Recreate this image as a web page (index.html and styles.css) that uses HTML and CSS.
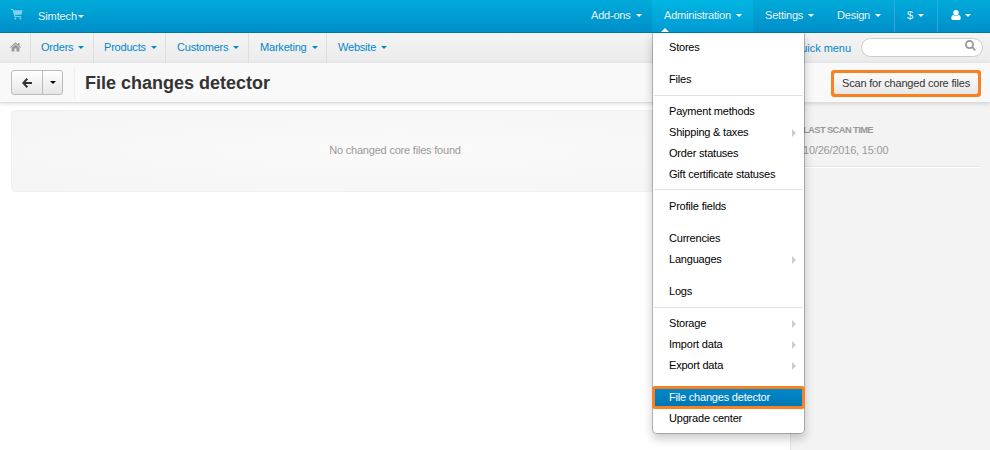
FILE: index.html
```html
<!DOCTYPE html>
<html lang="en">
<head>
<meta charset="utf-8">
<title>File changes detector</title>
<link rel="stylesheet" href="styles.css">
</head>
<body>
<header class="topbar">
  <svg class="cart" viewBox="0 0 12 11"><path d="M0 .5h2L3.800 7.600h6.400" fill="none" stroke="currentColor"/><path d="M2.300 1.200H11.500L10.600 5.400 3.500 6.200z" fill="currentColor"/><circle cx="4.300" cy="9.500" r="1" fill="currentColor"/><circle cx="9.400" cy="9.500" r="1" fill="currentColor"/></svg>
  <a class="store">Simtech<i class="caret"></i></a>
  <nav class="mainnav">
    <a class="addons">Add-ons<i class="caret"></i></a>
    <div class="admin">
      <a>Administration<i class="caret"></i></a>
      <ul class="menu">
        <li>Stores</li>
        <li class="gap"></li>
        <li>Files</li>
        <li class="gap line"></li>
        <li>Payment methods</li>
        <li class="more">Shipping &amp; taxes</li>
        <li>Order statuses</li>
        <li>Gift certificate statuses</li>
        <li class="gap line high"></li>
        <li>Profile fields</li>
        <li class="gap"></li>
        <li>Currencies</li>
        <li class="more">Languages</li>
        <li class="gap"></li>
        <li>Logs</li>
        <li class="gap line"></li>
        <li class="more">Storage</li>
        <li class="more">Import data</li>
        <li class="more">Export data</li>
        <li class="gap"></li>
        <li class="active">File changes detector</li>
        <li>Upgrade center</li>
      </ul>
    </div>
    <a class="settings">Settings<i class="caret"></i></a>
    <a class="design">Design<i class="caret"></i></a>
    <a class="currency">$<i class="caret"></i></a>
    <a class="user"><svg viewBox="0 0 10 10"><circle cx="5" cy="2.700" r="2.700"/><path d="M.300 8.300Q.300 5 2.400 4.900 5 6.700 7.600 4.900 9.700 5 9.700 8.300 9.700 10 8.400 10H1.600Q.300 10 .300 8.300z"/></svg><i class="caret"></i></a>
  </nav>
</header>
<nav class="subnav">
  <a class="home"><svg viewBox="0 0 11 10"><path d="M5.500.300 11 5.200l-.600.700L5.500 1.700.600 5.900 0 5.200z"/><path d="M8 .900h1.500v3L8 2.500z"/><path d="M5.500 2.500 9.400 5.800V9.500H6.500V6.500h-2v3H1.600V5.800z"/></svg></a>
  <a class="orders">Orders<i class="caret"></i></a>
  <a class="products">Products<i class="caret"></i></a>
  <a class="customers">Customers<i class="caret"></i></a>
  <a class="marketing">Marketing<i class="caret"></i></a>
  <a class="website">Website<i class="caret"></i></a>
  <a class="quick">Quick menu</a>
  <div class="search"><svg viewBox="0 0 11 11"><circle cx="4.500" cy="4.500" r="3.600"/><path d="M7.200 7.200 10.300 10.300"/></svg></div>
</nav>
<section class="titlebar">
  <div class="btngroup">
    <span class="back"><svg viewBox="0 0 10 10"><path d="M5.300.700 1.300 5l4 4.300M1.500 5H10"/></svg></span>
    <span class="drop"><i class="caret"></i></span>
  </div>
  <h1>File changes detector</h1>
  <div class="highlight"><button>Scan for changed core files</button></div>
</section>
<main>
  <div class="content"><p class="empty">No changed core files found</p></div>
  <aside>
    <h6>LAST SCAN TIME</h6>
    <p>10/26/2016, 15:00</p>
  </aside>
</main>
</body>
</html>
```
FILE: styles.css
```css
* { box-sizing: border-box; }
body {
  margin: 0;
  width: 990px;
  height: 450px;
  overflow: hidden;
  display: flex;
  flex-direction: column;
  background: #fff;
  font: 11px/21px "Liberation Sans", Arial, sans-serif;
  letter-spacing: -.2px;
}
.caret {
  display: inline-block;
  border: 3px solid transparent;
  border-top-color: currentColor;
  border-bottom: 0;
  margin-left: 5px;
  vertical-align: 2px;
}
.topbar {
  flex: none;
  height: 33px;
  display: flex;
  background: linear-gradient(#00abda, #008fc9);
  border-bottom: 1px solid #0078a8;
  color: #e9f8fd;
  line-height: 31px;
  text-shadow: 0 -1px 0 rgba(0, 0, 0, .15);
}
.topbar .caret { color: #fff; }
.cart { width: 12px; height: 11px; margin: 9px 15px 0 11px; color: #80d1eb; }
.store { line-height: 32px; letter-spacing: -.1px; }
.store .caret { margin-left: 1px; }
.mainnav { display: flex; margin-left: auto; }
.mainnav > * { padding-left: 12px; white-space: nowrap; }
.addons { width: 73px; }
.admin { width: 101px; position: relative; background: linear-gradient(#00b6e3, #009bd4); }
.admin::after {
  content: "";
  position: absolute;
  left: 9px;
  bottom: 0;
  border: 4px solid transparent;
  border-top: 0;
  border-bottom-color: #fff;
}
.settings { width: 72px; }
.design { width: 69px; }
.currency, .user { border-left: 1px solid #35a5e0; }
.currency { width: 43px; }
.user { width: 53px; }
.user svg { width: 10px; height: 10px; fill: #fff; margin-left: 1px; vertical-align: -1px; }
.user .caret { margin-left: 4px; }
.menu {
  position: absolute;
  z-index: 5;
  left: 0;
  top: 33px;
  width: 153px;
  margin: 0;
  padding: 4px 1px;
  list-style: none;
  background: #fff;
  background-clip: padding-box;
  border: 1px solid rgba(0, 0, 0, .22);
  border-top: 0;
  border-radius: 0 0 5px 5px;
  box-shadow: 0 5px 10px rgba(0, 0, 0, .2);
  color: #000;
  line-height: 21px;
  text-shadow: none;
}
.menu li { height: 21px; padding-left: 15px; }
.menu .gap { height: 11px; }
.menu .line { padding: 5px 0; }
.menu .high { padding: 4px 0 6px; }
.menu .line::after { content: ""; display: block; height: 1px; background: #e3e3e3; }
.more { display: flex; align-items: center; justify-content: space-between; padding-right: 7px; }
.more::after { content: ""; border: 4px solid transparent; border-left-color: #ccc; border-right: 0; }
.menu .active {
  height: 23px;
  margin: -1px -2px;
  padding-left: 14px;
  line-height: 17px;
  color: #fff;
  background: linear-gradient(#0088cc, #0077b3) padding-box, #f98121;
  border: 3px solid #f98121;
  border-radius: 3px;
}
.subnav {
  flex: none;
  height: 30px;
  display: flex;
  background: linear-gradient(#f4f4f4, #ebebeb);
  color: #08c;
  line-height: 29px;
}
.subnav > a { white-space: nowrap; padding-left: 10px; }
.home { width: 31px; border-right: 1px solid #dedede; }
.home svg { width: 11px; height: 10px; fill: #999; vertical-align: -1px; }
.orders { width: 63px; border-right: 1px solid #dedede; }
.products { width: 72px; border-right: 1px solid #dedede; }
.customers { width: 83px; border-right: 1px solid #dedede; }
.marketing { width: 78px; border-right: 1px solid #dedede; }
.website { width: 80px; }
.subnav > .customers, .subnav > .marketing, .subnav > .website { padding-left: 11px; }
.subnav > .quick { margin: 0 10px 0 auto; line-height: 31px; letter-spacing: -.05px; }
.search {
  width: 122px;
  height: 19px;
  margin: 5px 7px 0 0;
  border: 1px solid #ccc;
  border-radius: 10px;
  background: #fff;
  display: flex;
  justify-content: flex-end;
  padding: 1px 6px;
}
.search svg { width: 11px; height: 11px; fill: none; stroke: #999; stroke-width: 1.7; }
.titlebar {
  flex: none;
  height: 40px;
  display: flex;
  align-items: center;
  background: #f9f9f9;
  border-bottom: 1px solid #dcdcdc;
  box-shadow: 0 1px 4px rgba(0, 0, 0, .13);
  padding: 0 9px 0 11px;
  position: relative;
}
.btngroup {
  width: 52px;
  height: 25px;
  display: flex;
  border: 1px solid #bbb;
  border-radius: 3px;
  background: linear-gradient(#fff, #e6e6e6);
}
.back, .drop { display: flex; align-items: center; justify-content: center; }
.back { width: 31px; border-right: 1px solid #bbb; }
.back svg { width: 10px; height: 10px; fill: none; stroke: #333; stroke-width: 2; }
.drop { flex: 1; }
.drop .caret { margin: 0; }
h1 {
  margin: 0 0 0 11px;
  padding-left: 10px;
  border-left: 1px solid #eee;
  font-size: 18px;
  line-height: 32px;
  letter-spacing: 0;
  color: #333;
}
.highlight { margin: 1px 0 0 auto; width: 150px; height: 27px; background: #f98121; border-radius: 3px; padding: 3px; }
button {
  width: 144px;
  height: 21px;
  padding: 0;
  border: 0;
  border-radius: 2px;
  background: linear-gradient(#fcfcfc, #e8e8e8);
  color: #333;
  font: inherit;
  letter-spacing: inherit;
}
main { flex: 1; display: flex; }
.content { width: 790px; padding: 7px 11px; }
.empty {
  margin: 0;
  height: 82px;
  display: flex;
  align-items: center;
  justify-content: center;
  padding-bottom: 2px;
  border: 1px solid #f0f0f0;
  border-radius: 4px;
  background: radial-gradient(#fafafa, #f5f5f5);
  color: #999;
}
aside { flex: 1; padding: 21px 10px 0 12px; background: #f3f3f3; border-left: 1px solid #e3e3e3; color: #999; }
h6 { margin: 0; font-size: 9px; line-height: 12px; letter-spacing: -.6px; }
aside h6 { font-size: 9.35px; }
aside p { margin: 4px 0 0; height: 27px; border-bottom: 1px solid #e3e3e3; box-shadow: 0 1px #fff; }
```
